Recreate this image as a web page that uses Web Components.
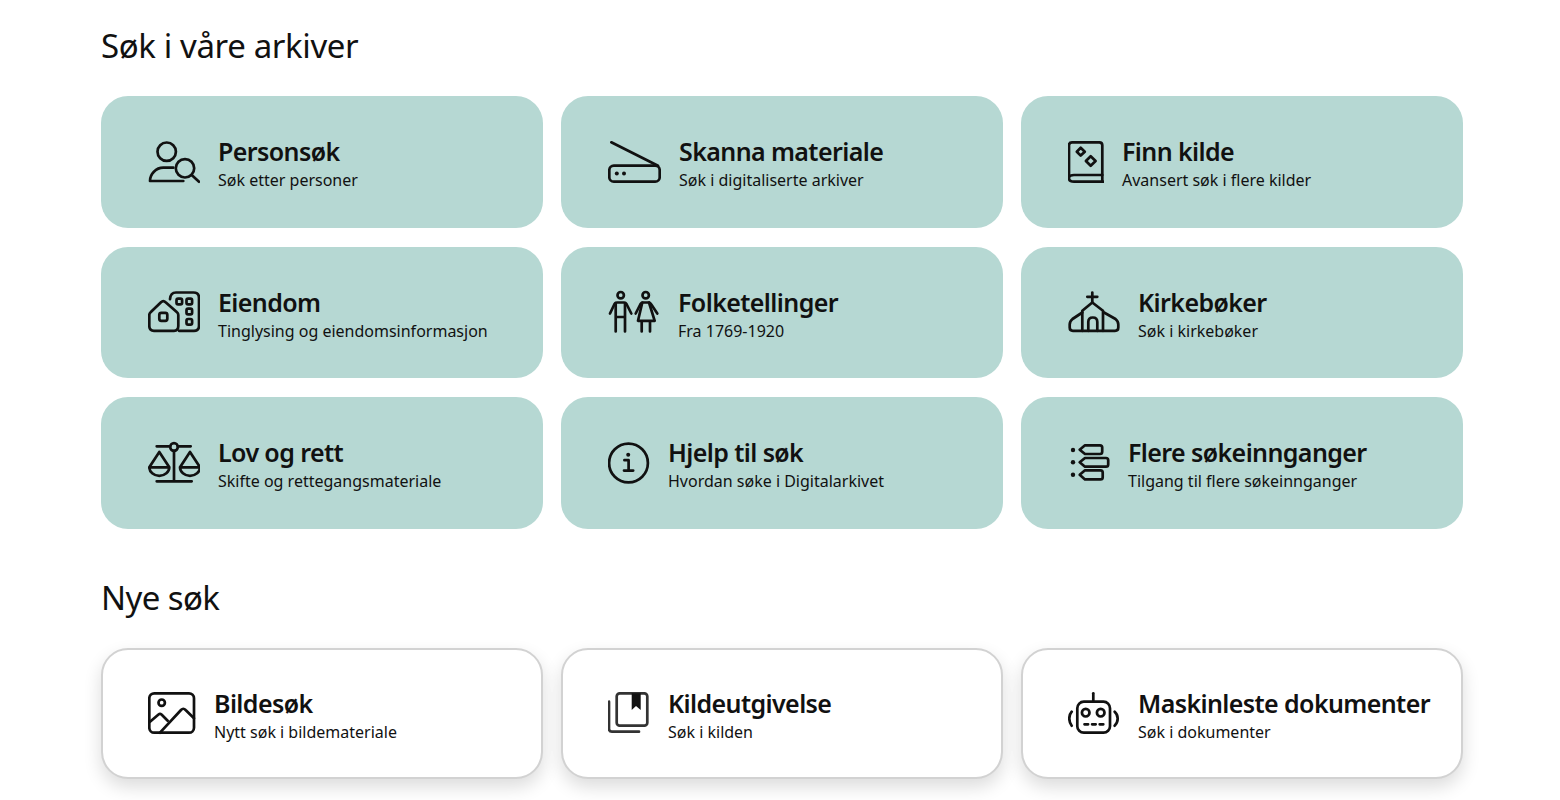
<!DOCTYPE html>
<html lang="no">
<head>
<meta charset="utf-8">
<title>Søk i våre arkiver</title>
<style>
  html, body { margin: 0; background: #fff; }
  body { font-family: "Noto Sans", "Open Sans", sans-serif; color: #111; }
</style>
</head>
<body>
<search-page>
  <search-section heading="Søk i våre arkiver">
    <search-card icon="person" width="52" title="Personsøk" sub="Søk etter personer"></search-card>
    <search-card icon="scanner" width="53" title="Skanna materiale" sub="Søk i digitaliserte arkiver"></search-card>
    <search-card icon="book" width="36" title="Finn kilde" sub="Avansert søk i flere kilder"></search-card>
    <search-card icon="house" width="52" title="Eiendom" sub="Tinglysing og eiendomsinformasjon"></search-card>
    <search-card icon="people" width="52" title="Folketellinger" sub="Fra 1769-1920"></search-card>
    <search-card icon="church" width="52" title="Kirkebøker" sub="Søk i kirkebøker"></search-card>
    <search-card icon="scales" width="52" title="Lov og rett" sub="Skifte og rettegangsmateriale"></search-card>
    <search-card icon="info" width="42" title="Hjelp til søk" sub="Hvordan søke i Digitalarkivet"></search-card>
    <search-card icon="list" width="42" title="Flere søkeinnganger" sub="Tilgang til flere søkeinnganger"></search-card>
  </search-section>
  <search-section heading="Nye søk" class="new">
    <search-card outlined icon="image" width="48" title="Bildesøk" sub="Nytt søk i bildemateriale"></search-card>
    <search-card outlined icon="volume" width="42" title="Kildeutgivelse" sub="Søk i kilden"></search-card>
    <search-card outlined icon="robot" width="52" title="Maskinleste dokumenter" sub="Søk i dokumenter"></search-card>
  </search-section>
</search-page>

<script>
const ICONS = {
  person: `<circle cx="18.7" cy="15.7" r="9.2"/><circle cx="37" cy="32.3" r="9.2"/><path d="M43.7 39 51 45.7M25.3 31.7H15.3C8 31.7 2 38 2 45H35.3"/>`,
  scanner: `<path d="M3.3 6.3 50 29.7"/><rect x="1.3" y="29.7" width="50.4" height="16" rx="4.5"/><circle cx="8.8" cy="37.6" r="2" class="f"/><circle cx="16" cy="37.6" r="2" class="f"/>`,
  book: `<path d="M1 42.3V9.3Q1 6.3 4 6.3H31.3Q34.3 6.3 34.3 9.3V39H6Q1 39 1 42.3 1 45.7 6 45.7H35.3"/><path d="M34.3 39V45.7"/><path d="M12.7 11.8 16.8 15.7 12.7 19.6 8.8 15.7Z"/><path d="M22.7 20.2 27.6 25 22.7 29.8 17.9 25Z"/>`,
  house: `<path d="M22 13.2Q22.5 6.5 28 6.5H45.5Q51 6.5 51 12V40Q51 44.8 46 44.8H31"/><path d="M1.3 29Q1.3 27.4 2.6 26.3L13 16.2Q15.3 14 17.6 16.2L29 26.3Q30.3 27.4 30.3 29V40Q30.3 44.8 26 44.8H6Q1.3 44.8 1.3 40Z"/><rect x="11.3" y="26.8" width="8" height="8" rx="2"/><rect x="28.5" y="12.7" width="5.6" height="5.6" rx="1.6"/><rect x="38.5" y="12.7" width="5.6" height="5.6" rx="1.6"/><rect x="38.5" y="22.7" width="5.6" height="5.6" rx="1.6"/><rect x="38.5" y="33" width="5.6" height="5.6" rx="1.6"/>`,
  people: `<circle cx="12.7" cy="9.2" r="3.2"/><circle cx="37.7" cy="9.2" r="3.2"/><path d="M2 27.5 6.5 18Q7.4 16.5 9 16.5H16Q17.6 16.5 18.5 18L23.3 27.5"/><path d="M7.7 17V45.5M17 17V45.5M7.7 31H17"/><path d="M27.7 27.5 32.5 18Q33.4 16.5 35 16.5H40.5Q42.1 16.5 43 18L49.3 27.5"/><path d="M34.3 16.5 30 34.8H46.7L41 16.5M33.7 34.8V45.5M42 34.8V45.5"/>`,
  church: `<path d="M24.3 6.5V16.5M19.3 10.8H29.3"/><path d="M14.3 44.8V24.8L24.3 16.5 35 24.8V44.8"/><path d="M20.3 44.8V36Q20.3 31.5 24.8 31.5 29.3 31.5 29.3 36V44.8"/><path d="M14.3 26.5 4.5 33Q1.7 35.3 1.7 38.5V41.5Q1.7 44.8 5 44.8H47Q50.3 44.8 50.3 41.5V38.5Q50.3 35.3 47.5 33L36 26.5"/>`,
  scales: `<circle cx="26" cy="10" r="3.8"/><path d="M8.7 9.3H22M30 9.3H42.7M26 13.8V44.3M8.7 44.3H43.7"/><path d="M11.3 15 1.3 30.3A10 8.5 0 0 0 21.3 30.3ZM1.3 30.3H21.3"/><path d="M42 15 32 30.3A10 8.5 0 0 0 52 30.3ZM32 30.3H52"/>`,
  info: `<circle cx="20.5" cy="26" r="19.4"/><circle cx="20.2" cy="17.8" r="2" class="f"/><path d="M16.4 23.2H20.6V33.6M16 33.6H25.2"/>`,
  list: `<circle cx="5" cy="13" r="2.2" class="f"/><circle cx="5" cy="25.3" r="2.2" class="f"/><circle cx="5" cy="37.7" r="2.2" class="f"/><path d="M17 8.3H32Q34.2 8.3 34.2 10.5V14.8Q34.2 17 32 17H17L11.7 12.7Z"/><path d="M17 21H38Q40.2 21 40.2 23.2V27.5Q40.2 29.7 38 29.7H17L11.7 25.3Z"/><path d="M17 33.3H32.5Q34.7 33.3 34.7 35.5V40.2Q34.7 42.4 32.5 42.4H17L11.7 37.8Z"/>`,
  image: `<rect x="1.3" y="6.3" width="44.7" height="39.4" rx="5"/><circle cx="13.7" cy="15.7" r="3.2"/><path d="M2 34.7 10.5 27.5Q12 26.3 13.5 27.5L19.7 33.7"/><path d="M12 45.7 33 23Q35.3 20.5 37.6 23L46 31.3"/>`,
  volume: `<path d="M1 14.7V41.7Q1 44.7 4 44.7H31" class="g"/><rect x="8.7" y="6.3" width="30.6" height="32.4" rx="3" class="g"/><path d="M23.7 6.3H32.7V23L28 19 23.7 23Z" class="f"/>`,
  robot: `<path d="M25.3 6.3V14.7"/><rect x="9.3" y="14.7" width="32.7" height="31" rx="6.5"/><circle cx="17.7" cy="25.7" r="3.8"/><circle cx="32.7" cy="25.7" r="3.8"/><path d="M16.5 37.3H36" stroke-dasharray="3.6 4"/><path d="M3.7 24.7Q1.3 27.5 1.3 31.5 1.3 35.5 3.7 38.7M46.7 24.7Q49.7 27.5 49.7 31.5 49.7 35.5 46.7 38.7"/>`
};

class SearchPage extends HTMLElement {
  constructor() {
    super();
    this.attachShadow({ mode: 'open' });
    this.shadowRoot.innerHTML = `
      <style>
        :host { display: block; box-sizing: border-box; width: 1560px; height: 800px; padding: 0 97px 0 101px; overflow: hidden; }
      </style>
      <slot></slot>
    `;
  }
}

class SearchSection extends HTMLElement {
  constructor() {
    super();
    this.attachShadow({ mode: 'open' });
    this.shadowRoot.innerHTML = `
      <style>
        :host { display: block; }
        :host(.new) { margin-top: 40px; }
        h2 { margin: 0; height: 96px; padding-top: 25px; box-sizing: border-box; font-size: 33px; line-height: 42px; font-weight: 400; letter-spacing: -0.38px; color: #111; }
        :host(.new) h2 { height: 79px; padding-top: 8px; letter-spacing: -0.6px; }
        .grid { display: grid; grid-template-columns: repeat(3, 442px); grid-auto-rows: 131.5px; gap: 19px 18px; }
        :host(.new) .grid { grid-auto-rows: 131px; }
      </style>
      <h2></h2>
      <div class="grid"><slot></slot></div>
    `;
    this.shadowRoot.querySelector('h2').textContent = this.getAttribute('heading');
  }
}

class SearchCard extends HTMLElement {
  constructor() {
    super();
    this.attachShadow({ mode: 'open' });
    this.shadowRoot.innerHTML = `
      <style>
        :host { display: flex; align-items: center; gap: 18px; box-sizing: border-box; padding-left: 47px; background: #b6d8d3; border-radius: 27px; color: #111; }
        :host([outlined]) { background: #fff; border: 2px solid #d2d2d2; padding-left: 45px; box-shadow: 0 8px 18px rgba(0,0,0,.14); }
        svg { flex: none; height: 52px; fill: none; stroke: #111; stroke-width: 2.7; stroke-linecap: round; stroke-linejoin: round; }
        svg .f { fill: #111; stroke: none; }
        svg .g { stroke: #333; }
        .text { padding-top: 9px; }
        .title { font-size: 25px; line-height: 29px; font-weight: 600; letter-spacing: -0.6px; white-space: nowrap; }
        .sub { font-size: 16px; line-height: 29px; letter-spacing: 0; white-space: nowrap; color: #111; }
      </style>
      <svg></svg>
      <div class="text">
        <div class="title"></div>
        <div class="sub"></div>
      </div>
    `;
    const width = this.getAttribute('width');
    const svg = this.shadowRoot.querySelector('svg');
    svg.setAttribute('viewBox', `0 0 ${width} 52`);
    svg.setAttribute('width', width);
    svg.innerHTML = ICONS[this.getAttribute('icon')];
    this.shadowRoot.querySelector('.title').textContent = this.getAttribute('title');
    this.shadowRoot.querySelector('.sub').textContent = this.getAttribute('sub');
  }
}

customElements.define('search-page', SearchPage);
customElements.define('search-section', SearchSection);
customElements.define('search-card', SearchCard);
</script>
</body>
</html>
